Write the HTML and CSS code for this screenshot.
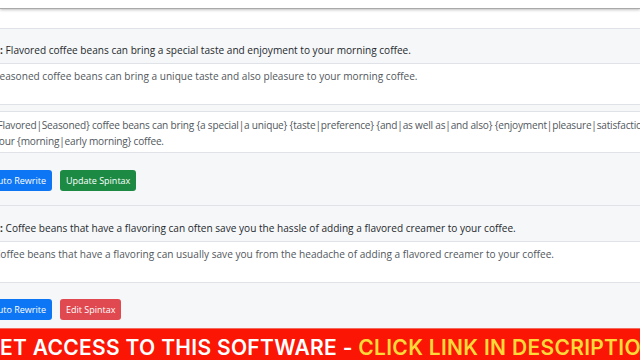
FILE: index.html
```
<!DOCTYPE html>
<html>
<head>
<meta charset="utf-8">
<link rel="stylesheet" href="styles.css">
</head>
<body>
<div class="topbar"></div>
<div class="spacer"></div>
<main class="list">
  <section class="item">
    <div class="hdr"><strong class="lbl">Sentence 1:</strong> Flavored coffee beans can bring a special taste and enjoyment to your morning coffee.</div>
    <div class="box">Seasoned coffee beans can bring a unique taste and also pleasure to your morning coffee.</div>
    <div class="box spin">{Flavored|Seasoned} coffee beans can bring {a special|a unique} {taste|preference} {and|as well as|and also} {enjoyment|pleasure|satisfaction} to<br>your {morning|early morning} coffee.</div>
    <div class="actions">
      <button class="btn blue">Auto Rewrite</button>
      <button class="btn green">Update Spintax</button>
    </div>
  </section>
  <section class="item second">
    <div class="hdr"><strong class="lbl">Sentence 2:</strong> Coffee beans that have a flavoring can often save you the hassle of adding a flavored creamer to your coffee.</div>
    <div class="box">Coffee beans that have a flavoring can usually save you from the headache of adding a flavored creamer to your coffee.</div>
    <div class="actions">
      <button class="btn blue">Auto Rewrite</button>
      <button class="btn red">Edit Spintax</button>
    </div>
  </section>
</main>
<div class="banner"><span class="w">GET ACCESS TO THIS SOFTWARE - </span><span class="y">CLICK LINK IN DESCRIPTION</span></div>
</body>
</html>
```
FILE: styles.css
```
html, body {
  margin: 0;
  padding: 0;
  width: 640px;
  height: 360px;
  overflow: hidden;
  background: #ffffff;
  font-family: "Open Sans", "Noto Sans", sans-serif;
}
.topbar {
  height: 8px;
  background: #ffffff;
  border-bottom: 1px solid #a9a9a9;
  box-shadow: 0 1px 3px rgba(0, 0, 0, 0.25);
  position: relative;
}
.spacer {
  height: 19px;
  background: #ffffff;
}
.list {
  width: 720px;
  background: #f6f7f9;
  font-size: 10.1px;
}
.item {
  border-top: 1px solid #dfe2e6;
  padding-bottom: 14px;
}
.hdr {
  height: 34px;
  box-sizing: border-box;
  padding: 13px 0 5px 6px;
  line-height: 16px;
  color: #25292d;
  white-space: nowrap;
}
.second .hdr {
  height: 35px;
  padding-top: 14px;
}
.lbl {
  display: inline-block;
  width: 80px;
  margin-left: -83px;
  text-align: right;
  font-weight: 700;
}
.box {
  margin-left: -6px;
  height: 42px;
  box-sizing: border-box;
  padding: 4px 0 0 0;
  line-height: 16px;
  background: #ffffff;
  border-top: 1px solid #dfe2e6;
  border-bottom: 1px solid #dfe2e6;
  color: #52575d;
  white-space: nowrap;
}
.box.spin {
  margin-top: 6px;
  padding-top: 5px;
  letter-spacing: -0.2px;
}
.actions {
  display: flex;
  gap: 8px;
  margin-top: 17px;
  margin-left: -14px;
}
.second {
  padding-bottom: 8px;
}
.second .actions {
  margin-top: 16px;
}
.btn {
  font-family: "Open Sans", "Noto Sans", sans-serif;
  font-size: 9px;
  height: 21px;
  padding: 0 6px;
  border: none;
  border-radius: 3px;
  color: #ffffff;
}
.blue { background: #0d76f4; }
.green { background: #1c8a43; }
.red { background: #e0494f; }
.banner {
  height: 32px;
  background: #fb1505;
  border-top: 1px solid #f56a5c;
  box-sizing: border-box;
  white-space: nowrap;
  font-family: "Inter", "DejaVu Sans", sans-serif;
  font-weight: 600;
  font-size: 21px;
  line-height: 38px;
  margin-left: -16px;
  letter-spacing: 0.3px;
}
.banner .w { color: #ffffff; }
.banner .y { color: #ffd93a; }
```
